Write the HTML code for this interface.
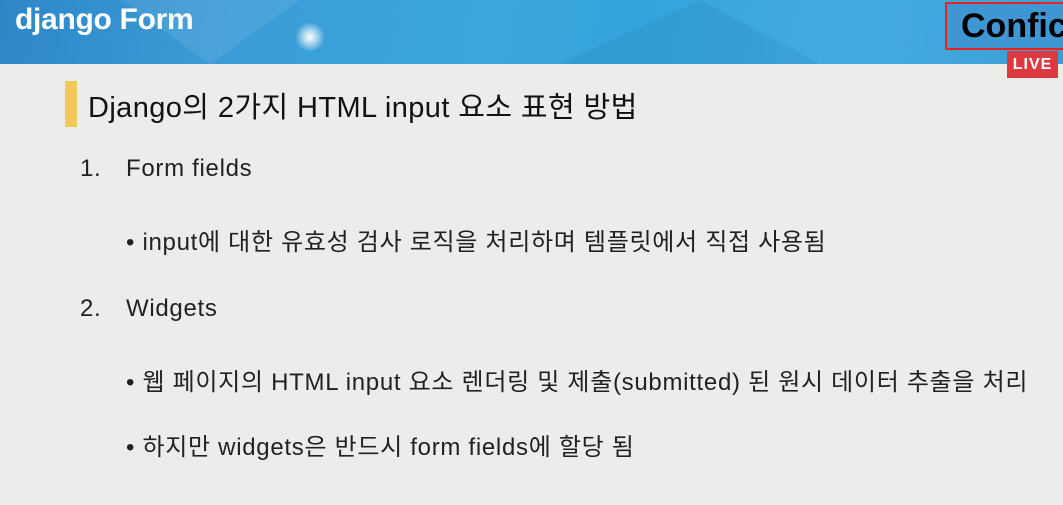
<!DOCTYPE html>
<html><head><meta charset="utf-8"><style>
*{margin:0;padding:0;box-sizing:border-box}
body{width:1063px;height:505px;overflow:hidden;background:#ececea;font-family:"Liberation Sans","Noto Sans CJK KR",sans-serif;position:relative;color:#111}
.hdr{position:absolute;left:0;top:0;width:1063px;height:64px;background:linear-gradient(100deg,#2d86c8 0%,#3b9bd6 20%,#3aa6dd 45%,#34a4dc 60%,#44abe0 80%,#3a9fd8 100%);overflow:hidden}
.tri1{position:absolute;left:120px;top:0;width:0;height:0;border-left:90px solid transparent;border-right:90px solid transparent;border-top:64px solid rgba(255,255,255,.08)}
.tri2{position:absolute;left:560px;top:0;width:0;height:0;border-left:140px solid transparent;border-right:120px solid transparent;border-bottom:64px solid rgba(0,60,120,.08)}
.glow{position:absolute;left:295px;top:22px;width:30px;height:30px;border-radius:50%;background:radial-gradient(circle,#fff 0%,rgba(255,255,255,.6) 30%,rgba(255,255,255,0) 70%)}
.t{position:absolute;left:15px;top:3px;color:#fff;font-size:30px;font-weight:bold;letter-spacing:-0.3px}
.conf{position:absolute;left:945px;top:2px;width:130px;height:48px;border:2px solid #e8231c;background:#3e96d2;color:#000;font-size:34px;font-weight:bold;padding-left:14px;line-height:44px}
.live{position:absolute;left:1007px;top:51px;width:51px;height:27px;background:#dc3a40;color:#fff;font-size:16px;font-weight:bold;text-align:center;line-height:27px;letter-spacing:1px}
.bar{position:absolute;left:65px;top:81px;width:12px;height:46px;background:#f0c85c}
.h{position:absolute;left:88px;top:84px;font-size:29px;letter-spacing:0.4px}
.p{position:absolute;font-size:24px;color:#222;letter-spacing:0.7px}
</style></head><body>
<div class="hdr"><div class="tri1"></div><div class="tri2"></div><div class="glow"></div><div class="t">django Form</div></div>
<div class="conf">Confic</div>
<div class="live">LIVE</div>
<div class="bar"></div>
<div class="h">Django의 2가지 HTML input 요소 표현 방법</div>
<div class="p" style="left:80px;top:155px">1.</div>
<div class="p" style="left:126px;top:155px">Form fields</div>
<div class="p" style="left:126px;top:222px">• input에 대한 유효성 검사 로직을 처리하며 템플릿에서 직접 사용됨</div>
<div class="p" style="left:80px;top:295px">2.</div>
<div class="p" style="left:126px;top:295px">Widgets</div>
<div class="p" style="left:126px;top:362px">• 웹 페이지의 HTML input 요소 렌더링 및 제출(submitted) 된 원시 데이터 추출을 처리</div>
<div class="p" style="left:126px;top:427px">• 하지만 widgets은 반드시 form fields에 할당 됨</div>
</body></html>
